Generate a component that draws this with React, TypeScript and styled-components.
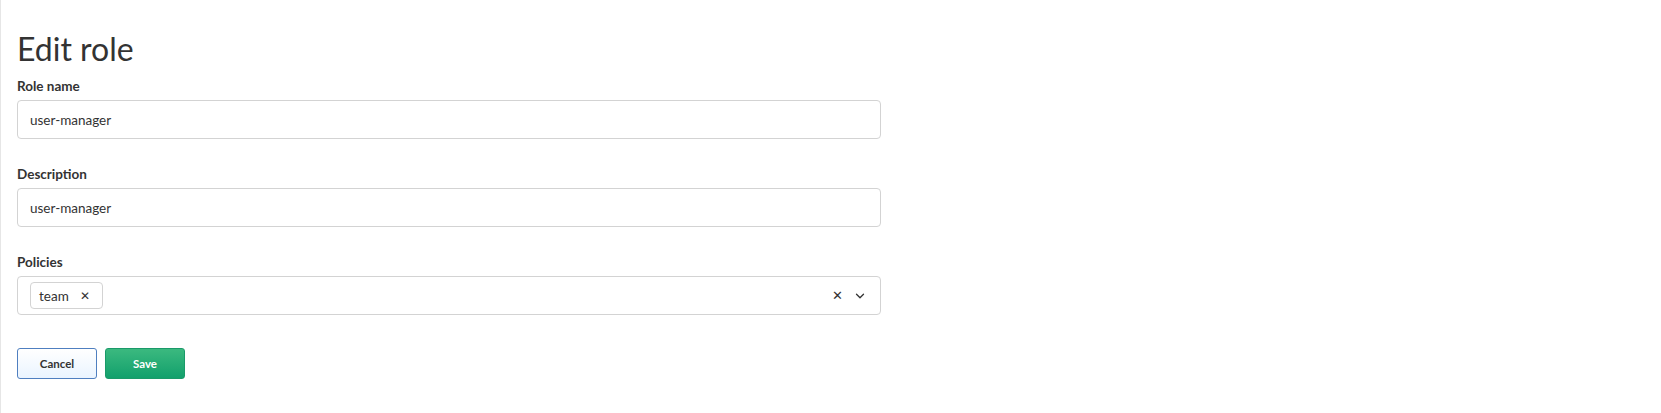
import React from 'react';
import styled, { createGlobalStyle } from 'styled-components';

const GlobalStyle = createGlobalStyle`
  html, body {
    margin: 0;
    padding: 0;
    background: #ffffff;
  }
  body {
    font-family: 'Lato', 'Noto Sans', sans-serif;
    color: #333333;
  }
`;

const Page = styled.div`
  min-height: 413px;
  box-sizing: border-box;
  border-left: 1px solid #e6e6e6;
  padding: 30px 16px 0 16px;
`;

const Title = styled.h1`
  margin: 0 0 8px 0;
  font-size: 32px;
  font-weight: 400;
  line-height: 1.2;
  color: #333333;
`;

const Form = styled.form`
  width: 864px;
  display: flex;
  flex-direction: column;
`;

const Field = styled.div`
  display: flex;
  flex-direction: column;
  gap: 4px;
  margin-bottom: 25px;
`;

const Label = styled.label`
  font-size: 13.5px;
  font-weight: 700;
  line-height: 20px;
  color: #333333;
`;

const TextInput = styled.input`
  box-sizing: border-box;
  height: 39px;
  width: 100%;
  padding: 0 12px;
  border: 1px solid #d3d3d3;
  border-radius: 4px;
  font-family: inherit;
  font-size: 13.5px;
  color: #333333;
  background: #ffffff;
  outline: none;
`;

const Select = styled.div`
  box-sizing: border-box;
  height: 39px;
  display: flex;
  align-items: center;
  padding: 0 13px 0 12px;
  border: 1px solid #d3d3d3;
  border-radius: 4px;
  background: #ffffff;
`;

const Values = styled.div`
  flex: 1;
  display: flex;
  gap: 6px;
`;

const Tag = styled.span`
  box-sizing: border-box;
  height: 27px;
  display: inline-flex;
  align-items: center;
  gap: 11px;
  padding: 0 12px 0 8px;
  border: 1px solid #d3d3d3;
  border-radius: 4px;
  font-size: 13.5px;
  color: #333333;
`;

const TagRemove = styled.span`
  font-size: 12px;
  color: #333333;
  line-height: 1;
`;

const Indicators = styled.div`
  display: flex;
  align-items: center;
  gap: 10px;
  color: #333333;
`;

const ClearMark = styled.span`
  font-size: 13px;
  line-height: 1;
`;

const Actions = styled.div`
  display: flex;
  gap: 8px;
  margin-top: 8px;
`;

const Button = styled.button<{ $primary?: boolean }>`
  box-sizing: border-box;
  width: 80px;
  height: 31px;
  border-radius: 3px;
  font-family: inherit;
  font-size: 11.5px;
  font-weight: 700;
  cursor: pointer;
  border: 1px solid ${(p) => (p.$primary ? '#1a9a69' : '#4f7fc0')};
  color: ${(p) => (p.$primary ? '#ffffff' : '#333333')};
  background: ${(p) =>
    p.$primary
      ? 'linear-gradient(to bottom, #3bb97f, #12a06c)'
      : 'linear-gradient(to bottom, #ffffff, #eaf4ff)'};
`;

const Chevron = () => (
  <svg width="14" height="14" viewBox="0 0 24 24" fill="none" stroke="#333" strokeWidth="2.2" strokeLinecap="round" strokeLinejoin="round">
    <path d="M6 9l6 6 6-6" />
  </svg>
);

const App: React.FC = () => {
  return (
    <>
      <GlobalStyle />
      <Page>
        <Title>Edit role</Title>
        <Form onSubmit={(e) => e.preventDefault()}>
          <Field>
            <Label>Role name</Label>
            <TextInput defaultValue="user-manager" />
          </Field>
          <Field>
            <Label>Description</Label>
            <TextInput defaultValue="user-manager" />
          </Field>
          <Field>
            <Label>Policies</Label>
            <Select>
              <Values>
                <Tag>
                  team
                  <TagRemove>✕</TagRemove>
                </Tag>
              </Values>
              <Indicators>
                <ClearMark>✕</ClearMark>
                <Chevron />
              </Indicators>
            </Select>
          </Field>
          <Actions>
            <Button type="button">Cancel</Button>
            <Button type="submit" $primary>
              Save
            </Button>
          </Actions>
        </Form>
      </Page>
    </>
  );
};

export default App;
